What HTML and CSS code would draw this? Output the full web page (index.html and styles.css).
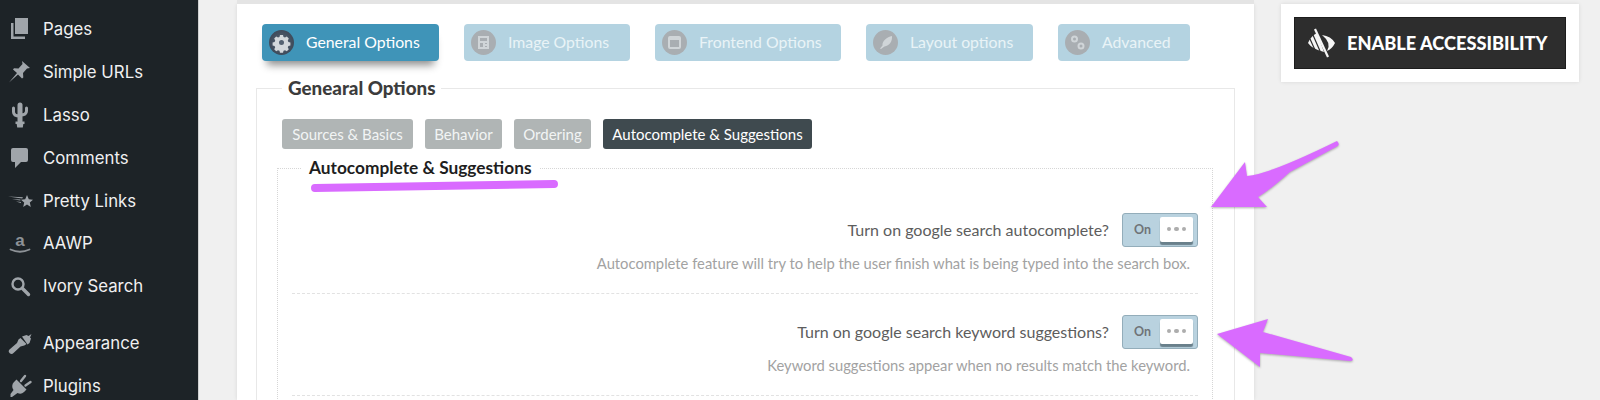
FILE: index.html
```html
<!DOCTYPE html>
<html lang="en">
<head>
<meta charset="utf-8">
<title>Search Options</title>
<link rel="stylesheet" href="styles.css">
</head>
<body>
<div class="page">
  <nav class="sidebar">
    <a class="menu-item"><svg class="menu-icon" viewBox="0 0 26 26"><path d="M8 2h13v16H8z"/><path d="M4 7h2.500v13.500H18V23H4z"/></svg><span>Pages</span></a>
    <a class="menu-item"><svg class="menu-icon" viewBox="0 0 26 26"><path d="M15 2l8 7-3 .5-4 4.500.3 4.500-1.300 1-4-4-9 8 8-9.500-4-3.500 1-1.300 4.500.3 4-4.500z"/></svg><span>Simple URLs</span></a>
    <a class="menu-item"><svg class="menu-icon" viewBox="0 0 26 26"><path class="cactus-trunk" d="M13 3v16"/><path class="stroke-icon" d="M6.500 6v4q0 4 6.500 4M19.500 6v3q0 4-6.500 4"/><path d="M8.500 19.500h9V22h-1.200l-.5 3.500h-5.600l-.5-3.500H8.500z"/></svg><span>Lasso</span></a>
    <a class="menu-item"><svg class="menu-icon" viewBox="0 0 26 26"><path d="M6 3h13a2 2 0 0 1 2 2v10a2 2 0 0 1-2 2h-5l-6 6v-6H6a2 2 0 0 1-2-2V5a2 2 0 0 1 2-2z"/></svg><span>Comments</span></a>
    <a class="menu-item"><svg class="menu-icon" viewBox="0 0 26 26"><path d="M20 7l1.800 4.300 4.200.4-3.200 2.900 1 4.400-3.800-2.400-3.800 2.400 1-4.400-3.200-2.900 4.200-.4z"/><path d="M1 8.500l15 .8-.8 1.200zM5 11l8.500.5-.2 1zM9 13.500l5 .5-.2 1z"/></svg><span>Pretty Links</span></a>
    <a class="menu-item"><svg class="menu-icon" viewBox="0 0 26 26"><text class="amazon-a" x="13" y="16" text-anchor="middle">a</text><path class="stroke-smile" d="M3.500 19.500q9.500 4.500 19 0"/></svg><span>AAWP</span></a>
    <a class="menu-item"><svg class="menu-icon" viewBox="0 0 26 26"><circle class="stroke-thin" cx="11" cy="11" r="5.500"/><path class="stroke-handle" d="M15.500 15.500l6 6"/></svg><span>Ivory Search</span></a>
    <a class="menu-item menu-gap"><svg class="menu-icon" viewBox="0 0 26 26"><path d="M15 6.500l4.500-1.500 2 1 3-2-1.500 3.500 1 1-1.500 4.500-2 1.500z"/><path d="M13.500 8l6 6-2.200 1.500-3.800 1-7 6.500a2.500 2.500 0 0 1-4-3.500l7.500-6.500 1.500-3.500z"/></svg><span>Appearance</span></a>
    <a class="menu-item"><svg class="menu-icon" viewBox="0 0 26 26"><path d="M9.500 6.500l10 10-2.500 2.500a5.500 5.500 0 0 1-6.500 1L5 24H3.500v-3l3-4a6 6 0 0 1 .5-8z"/><path class="stroke-prong" d="M14 8l4-5M18.500 12.500l5-3.500"/></svg><span>Plugins</span></a>
  </nav>

  <main class="content">
    <section class="card">
      <div class="tabs">
        <a class="tab tab-active"><span class="tab-icon"><svg viewBox="0 0 25 25"><path class="gear" d="M11 5h3l.5 2 1.500.6 1.800-1 2 2-1 1.800.6 1.500 2 .5v3l-2 .5-.6 1.500 1 1.800-2 2-1.800-1-1.500.6-.5 2h-3l-.5-2-1.500-.6-1.800 1-2-2 1-1.800-.6-1.500-2-.5v-3l2-.5.6-1.500-1-1.800 2-2 1.800 1 1.500-.6zM12.500 10a2.500 2.500 0 1 0 0 5 2.500 2.500 0 0 0 0-5z"/></svg></span><span class="tab-text">General Options</span></a>
        <a class="tab"><span class="tab-icon"><svg viewBox="0 0 25 25"><path class="glyph" d="M7 6h11v13H7zM9 8v3h7V8zM9 13v4h3v-4zM14 13v1h2v-1zM14 16v1h2v-1z"/></svg></span><span class="tab-text">Image Options</span></a>
        <a class="tab"><span class="tab-icon"><svg viewBox="0 0 25 25"><path class="glyph" d="M8 6h9a2 2 0 0 1 2 2v9a2 2 0 0 1-2 2H8a2 2 0 0 1-2-2V8a2 2 0 0 1 2-2zM8 10v7h9v-7z"/></svg></span><span class="tab-text">Frontend Options</span></a>
        <a class="tab"><span class="tab-icon"><svg viewBox="0 0 25 25"><path class="glyph" d="M19 6c.5 5-2.500 10-7.500 10.500L8 19l-1-.5 2.500-3C9 11 14 7 19 6z"/></svg></span><span class="tab-text">Layout options</span></a>
        <a class="tab"><span class="tab-icon"><svg viewBox="0 0 25 25"><circle class="ring" cx="9.500" cy="9" r="2.500"/><circle class="ring" cx="16" cy="16" r="2.500"/></svg></span><span class="tab-text">Advanced</span></a>
      </div>

      <fieldset class="outer-set">
        <legend class="outer-legend">Genearal Options</legend>
        <div class="subtabs">
          <a class="subtab">Sources &amp; Basics</a>
          <a class="subtab">Behavior</a>
          <a class="subtab">Ordering</a>
          <a class="subtab subtab-active">Autocomplete &amp; Suggestions</a>
        </div>
        <fieldset class="inner-set">
          <legend class="inner-legend">Autocomplete &amp; Suggestions</legend>
          <div class="option">
            <div class="option-line">
              <label class="option-label">Turn on google search autocomplete?</label>
              <span class="toggle"><span class="toggle-on">On</span><span class="knob"><i></i><i></i><i></i></span></span>
            </div>
            <p class="option-desc">Autocomplete feature will try to help the user finish what is being typed into the search box.</p>
          </div>
          <div class="option">
            <div class="option-line">
              <label class="option-label">Turn on google search keyword suggestions?</label>
              <span class="toggle"><span class="toggle-on">On</span><span class="knob"><i></i><i></i><i></i></span></span>
            </div>
            <p class="option-desc">Keyword suggestions appear when no results match the keyword.</p>
          </div>
        </fieldset>
      </fieldset>
    </section>

    <aside class="side-box">
      <a class="access-btn">
        <svg class="eye" viewBox="0 0 30 30"><path class="eye-fill" d="M10 5Q4 8 1 15q4 6 16 9z"/><path class="eye-stripes" d="M6 7l7 16M3 11l5 11"/><path class="eye-fill" d="M15 7q9 1 13 8-3 6-8 8 5-8-5-16z"/><path class="eye-slash" d="M8 1l13 28"/></svg>
        <span>ENABLE ACCESSIBILITY</span>
      </a>
    </aside>
  </main>

  <svg class="annotations" viewBox="0 0 1600 400">
    <path class="marker" d="M315 188L554 184"/>
    <path class="arrow" d="M1337 141Q1341 145 1336 147L1290 172Q1270 190 1258 197L1267 207H1211L1245 162L1247 176Q1270 174 1337 141z"/>
    <path class="arrow" d="M1217 334L1268 319L1263 332L1351 357Q1355 361 1350 361L1260 353V367z"/>
  </svg>
</div>
</body>
</html>
```

FILE: styles.css
```css
* { box-sizing: border-box; }
html, body { margin: 0; height: 400px; overflow: hidden; }
body { background: #f0f0f0; font-family: "Lato", "Liberation Sans", sans-serif; }

.page { position: relative; display: flex; width: 1600px; height: 400px; }

/* Sidebar */
.sidebar {
  width: 199px;
  height: 400px;
  flex: none;
  padding-top: 8px;
  background: #1d2327;
  border-right: 1px solid #d0d0d0;
  overflow: hidden;
}
.menu-item {
  display: flex;
  align-items: center;
  gap: 10px;
  height: 42.8px;
  padding-left: 7px;
  color: #f0f0f1;
  font-family: "Inter", "Roboto", sans-serif;
  font-size: 16.800px;
  white-space: nowrap;
}
.menu-gap { margin-top: 14px; }
.menu-icon { width: 26px; height: 26px; flex: none; fill: #a0a5aa; overflow: visible; }
.cactus-trunk { fill: none; stroke: #a0a5aa; stroke-width: 5; stroke-linecap: round; }
.stroke-icon { fill: none; stroke: #a0a5aa; stroke-width: 3; stroke-linecap: round; }
.stroke-smile { fill: none; stroke: #8d9297; stroke-width: 1.800; stroke-linecap: round; }
.stroke-thin { fill: none; stroke: #a0a5aa; stroke-width: 2.400; }
.stroke-handle { fill: none; stroke: #a0a5aa; stroke-width: 3.400; stroke-linecap: round; }
.stroke-prong { fill: none; stroke: #a0a5aa; stroke-width: 2.400; stroke-linecap: round; }
.amazon-a { font-family: "Liberation Sans", sans-serif; font-size: 17px; font-weight: 700; fill: #8d9297; }

/* Main area */
.content {
  display: flex;
  align-items: flex-start;
  gap: 27px;
  padding: 4px 0 0 38px;
}
.card {
  width: 1017px;
  height: 396px;
  flex: none;
  padding: 20px 19px 0;
  background: #fff;
  box-shadow: 0 -4px 0 #e4e4e4, 0 0 4px rgba(0, 0, 0, .1);
  overflow: hidden;
}

/* Top tabs */
.tabs {
  display: grid;
  grid-template-columns: 177px 166px 186px 167px 132px;
  column-gap: 25px;
  margin: 0 6px 15px;
}
.tab {
  display: flex;
  align-items: center;
  height: 37px;
  padding-left: 7px;
  border-radius: 4px;
  background: #b4d3e1;
  color: #e9f3f7;
  font-size: 15.800px;
  white-space: nowrap;
}
.tab-text { margin-bottom: 2px; }
.tab-active {
  background: #3f94b8;
  color: #fff;
  box-shadow: 0 9px 8px -5px rgba(0, 0, 0, .45);
}
.tab-icon {
  width: 25px;
  height: 25px;
  flex: none;
  margin-right: 12px;
  border-radius: 50%;
  background: #a9aeb2;
}
.tab-icon svg { display: block; width: 25px; height: 25px; }
.tab-active .tab-icon { background: radial-gradient(circle, #566474, #344050); }
.gear { fill: #d3d8dc; fill-rule: evenodd; }
.glyph { fill: #d0d5d8; fill-rule: evenodd; }
.ring { fill: none; stroke: #d0d5d8; stroke-width: 2; }

/* Option groups */
.outer-set {
  height: 330px;
  margin: 0;
  padding: 0 25px;
  border: 1px solid #e8e8e8;
  border-bottom: 0;
}
.outer-legend {
  margin-left: 0;
  padding: 0 6px;
  color: #3c3c3c;
  font-size: 18.800px;
  font-weight: 900;
  line-height: 24px;
}
.subtabs {
  display: grid;
  grid-template-columns: 131px 77px 77px 209px;
  column-gap: 12px;
  margin: 19px 0 8px;
}
.subtab {
  height: 30px;
  border-radius: 3px;
  background: #b0b5b5;
  color: #f2f4f4;
  font-size: 15px;
  line-height: 30px;
  text-align: center;
  white-space: nowrap;
}
.subtab-active { background: #3f4a4f; color: #fff; }
.inner-set {
  height: 260px;
  margin: 0 -4px 0 -5px;
  padding: 13px 14px 0;
  border: 1px dotted #d6d6d6;
  border-bottom: 0;
}
.inner-legend {
  margin-left: 9px;
  padding: 0 8px;
  color: #1e1e1e;
  font-size: 17.300px;
  font-weight: 700;
  line-height: 22px;
}
.option {
  height: 102px;
  padding-top: 21px;
  border-bottom: 1px dashed #e2e2e2;
}
.option-line {
  display: flex;
  align-items: center;
  justify-content: flex-end;
  gap: 13px;
}
.option-label { margin-bottom: 2px; color: #5d5d5d; font-size: 16px; }
.option-desc {
  margin: 6px 8px 0 0;
  color: #a2a2a2;
  font-size: 14.750px;
  line-height: 20px;
  text-align: right;
}

/* Toggle */
.toggle {
  display: flex;
  align-items: center;
  justify-content: space-between;
  width: 76px;
  height: 34px;
  padding: 0 4px 2px 11px;
  border: 1px solid #93adba;
  border-radius: 3px;
  background: #b9d2df;
}
.toggle-on { color: #6f7478; font-size: 12.500px; font-weight: 700; }
.knob {
  display: flex;
  align-items: center;
  justify-content: center;
  gap: 3px;
  width: 33px;
  height: 25px;
  border-radius: 2px;
  background: #fff;
  box-shadow: 0 3px 1px rgba(40, 60, 70, .55);
}
.knob i { width: 4.500px; height: 4.500px; border-radius: 50%; background: #adadad; }

/* Accessibility box */
.side-box {
  width: 298px;
  height: 78px;
  flex: none;
  padding: 13px 13px 0;
  background: #fff;
  box-shadow: 0 0 4px rgba(0, 0, 0, .1);
}
.access-btn {
  display: flex;
  align-items: center;
  gap: 10px;
  height: 52px;
  padding-left: 12px;
  border: 1px solid #1c1c1c;
  background: #2d2d2d;
  color: #fff;
  font-size: 18.200px;
  font-weight: 900;
  white-space: nowrap;
}
.eye { width: 30px; height: 30px; flex: none; }
.eye-fill { fill: #f5f5f5; }
.eye-stripes { fill: none; stroke: #2d2d2d; stroke-width: 1.200; }
.eye-slash { fill: none; stroke: #f5f5f5; stroke-width: 2.200; }

/* Hand-drawn annotations lying over the page */
.annotations { position: absolute; inset: 0; width: 1600px; height: 400px; pointer-events: none; }
.marker { fill: none; stroke: #d96bff; stroke-width: 8; stroke-linecap: round; }
.arrow { fill: #d96bff; filter: drop-shadow(0 1px 1px rgba(0, 0, 0, .3)); }
```
